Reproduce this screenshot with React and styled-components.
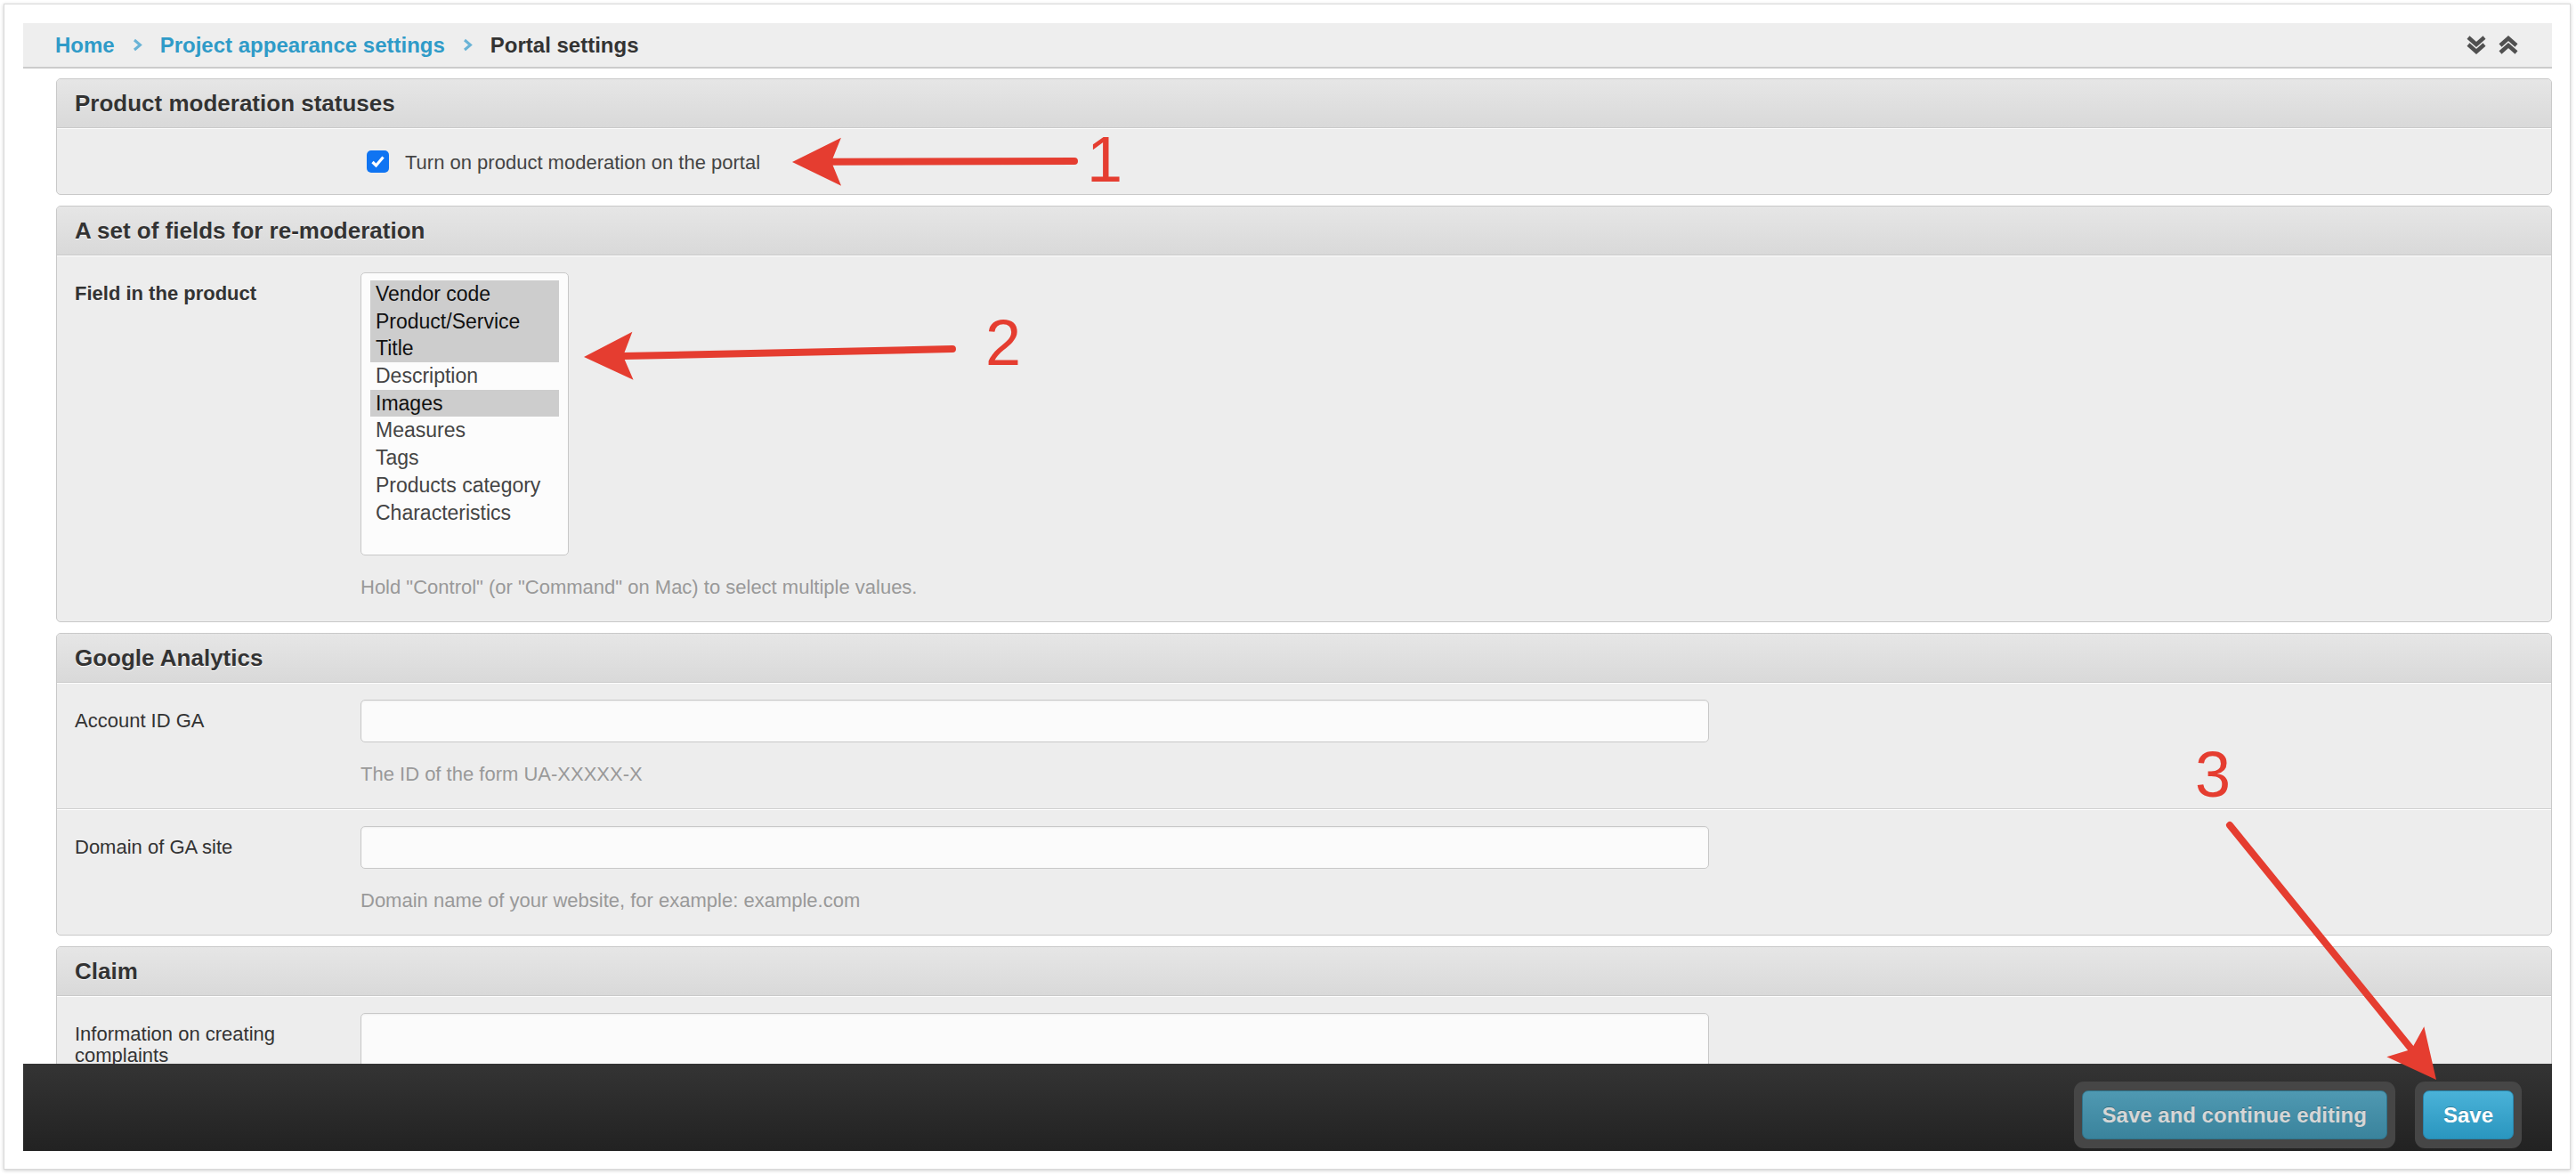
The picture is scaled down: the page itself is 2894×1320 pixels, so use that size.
import React from 'react';
import styled, { createGlobalStyle } from 'styled-components';

const GlobalStyle = createGlobalStyle`
  * { box-sizing: border-box; }
  html, body {
    margin: 0;
    padding: 0;
    background: #fff;
  }
  body {
    font-family: "Liberation Sans", Arial, sans-serif;
    overflow: hidden;
  }
`;

const FIELDS = [
  { name: 'Vendor code', on: true },
  { name: 'Product/Service', on: true },
  { name: 'Title', on: true },
  { name: 'Description', on: false },
  { name: 'Images', on: true },
  { name: 'Measures', on: false },
  { name: 'Tags', on: false },
  { name: 'Products category', on: false },
  { name: 'Characteristics', on: false },
];

const RED = '#e53d30';

// arrow head geometry, same for every callout
const headFor = (tx, ty, hx, hy) => {
  const len = Math.hypot(hx - tx, hy - ty);
  const ux = (hx - tx) / len;
  const uy = (hy - ty) / len;
  const px = -uy;
  const py = ux;
  const L = 55, W = 27, N = 44;
  const bx = hx - ux * L;
  const by = hy - uy * L;
  const nx = hx - ux * N;
  const ny = hy - uy * N;
  return {
    end: [nx, ny],
    points: `${hx},${hy} ${bx + px * W},${by + py * W} ${nx},${ny} ${bx - px * W},${by - py * W}`,
  };
};

const Callout = ({ tail, tip, label, at }) => {
  const head = headFor(tail[0], tail[1], tip[0], tip[1]);
  return (
    <g>
      <line
        x1={tail[0]} y1={tail[1]} x2={head.end[0]} y2={head.end[1]}
        stroke={RED} strokeWidth="8" strokeLinecap="round"
      />
      <polygon points={head.points} fill={RED} />
      <text
        x={at[0]} y={at[1]} fill={RED} textAnchor="middle"
        fontFamily='"Liberation Sans", Arial, sans-serif' fontSize="72"
      >
        {label}
      </text>
    </g>
  );
};

const App = () => {
  return (
    <Root>
      <GlobalStyle />
      <Card>
        <Breadcrumbs>
          <Trail>
            <Crumb href="#">Home</Crumb>
            <Sep viewBox="0 0 11 15">
              <polyline points="2,2 8.5,7.5 2,13" />
            </Sep>
            <Crumb href="#">Project appearance settings</Crumb>
            <Sep viewBox="0 0 11 15">
              <polyline points="2,2 8.5,7.5 2,13" />
            </Sep>
            <Current>Portal settings</Current>
          </Trail>
          <Toggles>
            <Toggle viewBox="0 0 22 21">
              <polyline points="2,2 11,10 20,2" />
              <polyline points="2,10 11,18 20,10" />
            </Toggle>
            <Toggle viewBox="0 0 22 21">
              <polyline points="2,11 11,3 20,11" />
              <polyline points="2,19 11,11 20,19" />
            </Toggle>
          </Toggles>
        </Breadcrumbs>

        <Content>
          <Panel>
            <PanelHeader>Product moderation statuses</PanelHeader>
            <PanelBody>
              <CheckRow>
                <CheckBox>
                  <svg width="17" height="17" viewBox="0 0 17 17">
                    <polyline points="2.5,9 6.5,13 14.5,3.5" />
                  </svg>
                </CheckBox>
                <CheckLabel>Turn on product moderation on the portal</CheckLabel>
              </CheckRow>
            </PanelBody>
          </Panel>

          <Panel>
            <PanelHeader>A set of fields for re-moderation</PanelHeader>
            <PanelBody>
              <Row>
                <Label $bold>Field in the product</Label>
                <Field>
                  <ListBox>
                    {FIELDS.map((f) => (
                      <Option key={f.name} $on={f.on}>{f.name}</Option>
                    ))}
                  </ListBox>
                  <Help>Hold "Control" (or "Command" on Mac) to select multiple values.</Help>
                </Field>
              </Row>
            </PanelBody>
          </Panel>

          <Panel>
            <PanelHeader>Google Analytics</PanelHeader>
            <PanelBody>
              <Row>
                <Label>Account ID GA</Label>
                <Field>
                  <Input />
                  <Help>The ID of the form UA-XXXXX-X</Help>
                </Field>
              </Row>
              <Row>
                <Label>Domain of GA site</Label>
                <Field>
                  <Input />
                  <Help>Domain name of your website, for example: example.com</Help>
                </Field>
              </Row>
            </PanelBody>
          </Panel>

          <Panel>
            <PanelHeader>Claim</PanelHeader>
            <PanelBody>
              <Row>
                <Label>Information on creating complaints</Label>
                <Field>
                  <TextArea />
                </Field>
              </Row>
            </PanelBody>
          </Panel>
        </Content>

        <Footer>
          <Well>
            <Button>Save and continue editing</Button>
          </Well>
          <Well>
            <Button $primary>Save</Button>
          </Well>
        </Footer>
      </Card>

      <Annotations width="2894" height="1320" viewBox="0 0 2894 1320">
        <Callout tail={[1207, 181]} tip={[890, 182]} label="1" at={[1241, 204]} />
        <Callout tail={[1070, 392]} tip={[656, 401]} label="2" at={[1127, 410]} />
        <Callout tail={[2505, 927]} tip={[2737, 1213]} label="3" at={[2486, 895]} />
      </Annotations>
    </Root>
  );
};

export default App;

const Root = styled.div`
  position: relative;
  width: 2894px;
  height: 1320px;
  padding: 4px 6px 6px 4px;
`;

const Card = styled.div`
  height: 100%;
  display: flex;
  flex-direction: column;
  padding: 21px 20px 20px 21px;
  background: #fff;
  border: 1px solid #d9d9d9;
  box-shadow: 0 1px 4px rgba(0, 0, 0, 0.2);
`;

const Breadcrumbs = styled.div`
  flex: none;
  height: 51px;
  display: flex;
  align-items: center;
  justify-content: space-between;
  padding: 0 38px 0 36px;
  background: #eeeeee;
  border-bottom: 2px solid #cbcbcb;
`;

const Trail = styled.div`
  display: flex;
  align-items: center;
  gap: 20px;
  font-size: 24px;
  font-weight: bold;
`;

const Crumb = styled.a`
  color: #2f9bc8;
  text-decoration: none;
`;

const Current = styled.span`
  color: #333;
`;

const Sep = styled.svg`
  width: 11px;
  height: 15px;
  fill: none;
  stroke: #69b3d6;
  stroke-width: 3;
`;

const Toggles = styled.div`
  display: flex;
  align-items: center;
  gap: 14px;
`;

const Toggle = styled.svg`
  width: 22px;
  height: 21px;
  fill: none;
  stroke: #505050;
  stroke-width: 4.5;
`;

const Content = styled.div`
  flex: 1;
  min-height: 0;
  overflow: hidden;
  padding: 11px 0 0 37px;
`;

const Panel = styled.section`
  margin-bottom: 12px;
  background: #ededed;
  border: 1px solid #c9c9c9;
  border-radius: 5px;
  overflow: hidden;
`;

const PanelHeader = styled.h2`
  margin: 0;
  height: 55px;
  display: flex;
  align-items: center;
  padding-left: 20px;
  background: linear-gradient(#e6e6e6, #d9d9d9);
  border-bottom: 1px solid #c9c9c9;
  color: #333;
  font-size: 26px;
  font-weight: bold;
  text-shadow: 0 1px 0 #fff;
`;

const PanelBody = styled.div`
  border-top: 1px solid #fff;
`;

const CheckRow = styled.div`
  height: 73px;
  display: flex;
  align-items: center;
  gap: 18px;
  padding-left: 348px;
`;

const CheckBox = styled.span`
  width: 25px;
  height: 25px;
  display: flex;
  align-items: center;
  justify-content: center;
  background: #0f74f2;
  border-radius: 5px;

  polyline {
    fill: none;
    stroke: #fff;
    stroke-width: 3.2;
  }
`;

const CheckLabel = styled.span`
  font-size: 22px;
  color: #444;
  padding-top: 3px;
`;

const Row = styled.div`
  display: flex;
  padding: 18px 0 26px 20px;

  & + & {
    border-top: 1px solid #fff;
  }
  &:not(:last-child) {
    border-bottom: 1px solid #d0d0d0;
  }
`;

const Label = styled.div`
  flex: none;
  width: 321px;
  padding: 12px 20px 0 0;
  font-size: 22px;
  line-height: 24px;
  color: #333;
  font-weight: ${(p) => (p.$bold ? 'bold' : 'normal')};
`;

const Field = styled.div`
  display: flex;
  flex-direction: column;
`;

const Input = styled.div`
  width: 1515px;
  height: 48px;
  background: #fbfbfb;
  border: 1px solid #c8c8c8;
  border-radius: 5px;
  box-shadow: inset 0 1px 2px rgba(0, 0, 0, 0.05);
`;

const TextArea = styled(Input)`
  height: 160px;
`;

const ListBox = styled.div`
  width: 234px;
  height: 318px;
  padding: 8px 10px;
  background: #fcfcfc;
  border: 1px solid #c8c8c8;
  border-radius: 5px;
`;

const Option = styled.div`
  height: 30.7px;
  line-height: 30.7px;
  padding-left: 6px;
  font-size: 23px;
  white-space: nowrap;
  color: ${(p) => (p.$on ? '#111' : '#444')};
  background: ${(p) => (p.$on ? '#cdcdcd' : 'transparent')};
`;

const Help = styled.div`
  margin-top: 24px;
  font-size: 22px;
  line-height: 24px;
  color: #999;
`;

const Footer = styled.div`
  flex: none;
  height: 98px;
  display: flex;
  justify-content: flex-end;
  align-items: flex-start;
  gap: 22px;
  padding: 20px 34px 0 0;
  background: linear-gradient(#343434, #222);
`;

const Well = styled.div`
  padding: 10px 9px;
  background: #464646;
  border-radius: 11px;
`;

const Button = styled.button`
  height: 55px;
  padding: 0 22px;
  border-radius: 7px;
  font-family: "Liberation Sans", Arial, sans-serif;
  font-size: 24px;
  font-weight: bold;
  cursor: pointer;
  color: ${(p) => (p.$primary ? '#fff' : '#d6d6d6')};
  border: 1px solid ${(p) => (p.$primary ? '#2786ad' : '#2f748c')};
  background: ${(p) =>
    p.$primary
      ? 'linear-gradient(#4ab2d8, #2a96bf)'
      : 'linear-gradient(#4f99b2, #3a839c)'};
  text-shadow: 0 -1px 0 rgba(0, 0, 0, 0.25);
`;

const Annotations = styled.svg`
  position: absolute;
  top: 0;
  left: 0;
  pointer-events: none;
`;
